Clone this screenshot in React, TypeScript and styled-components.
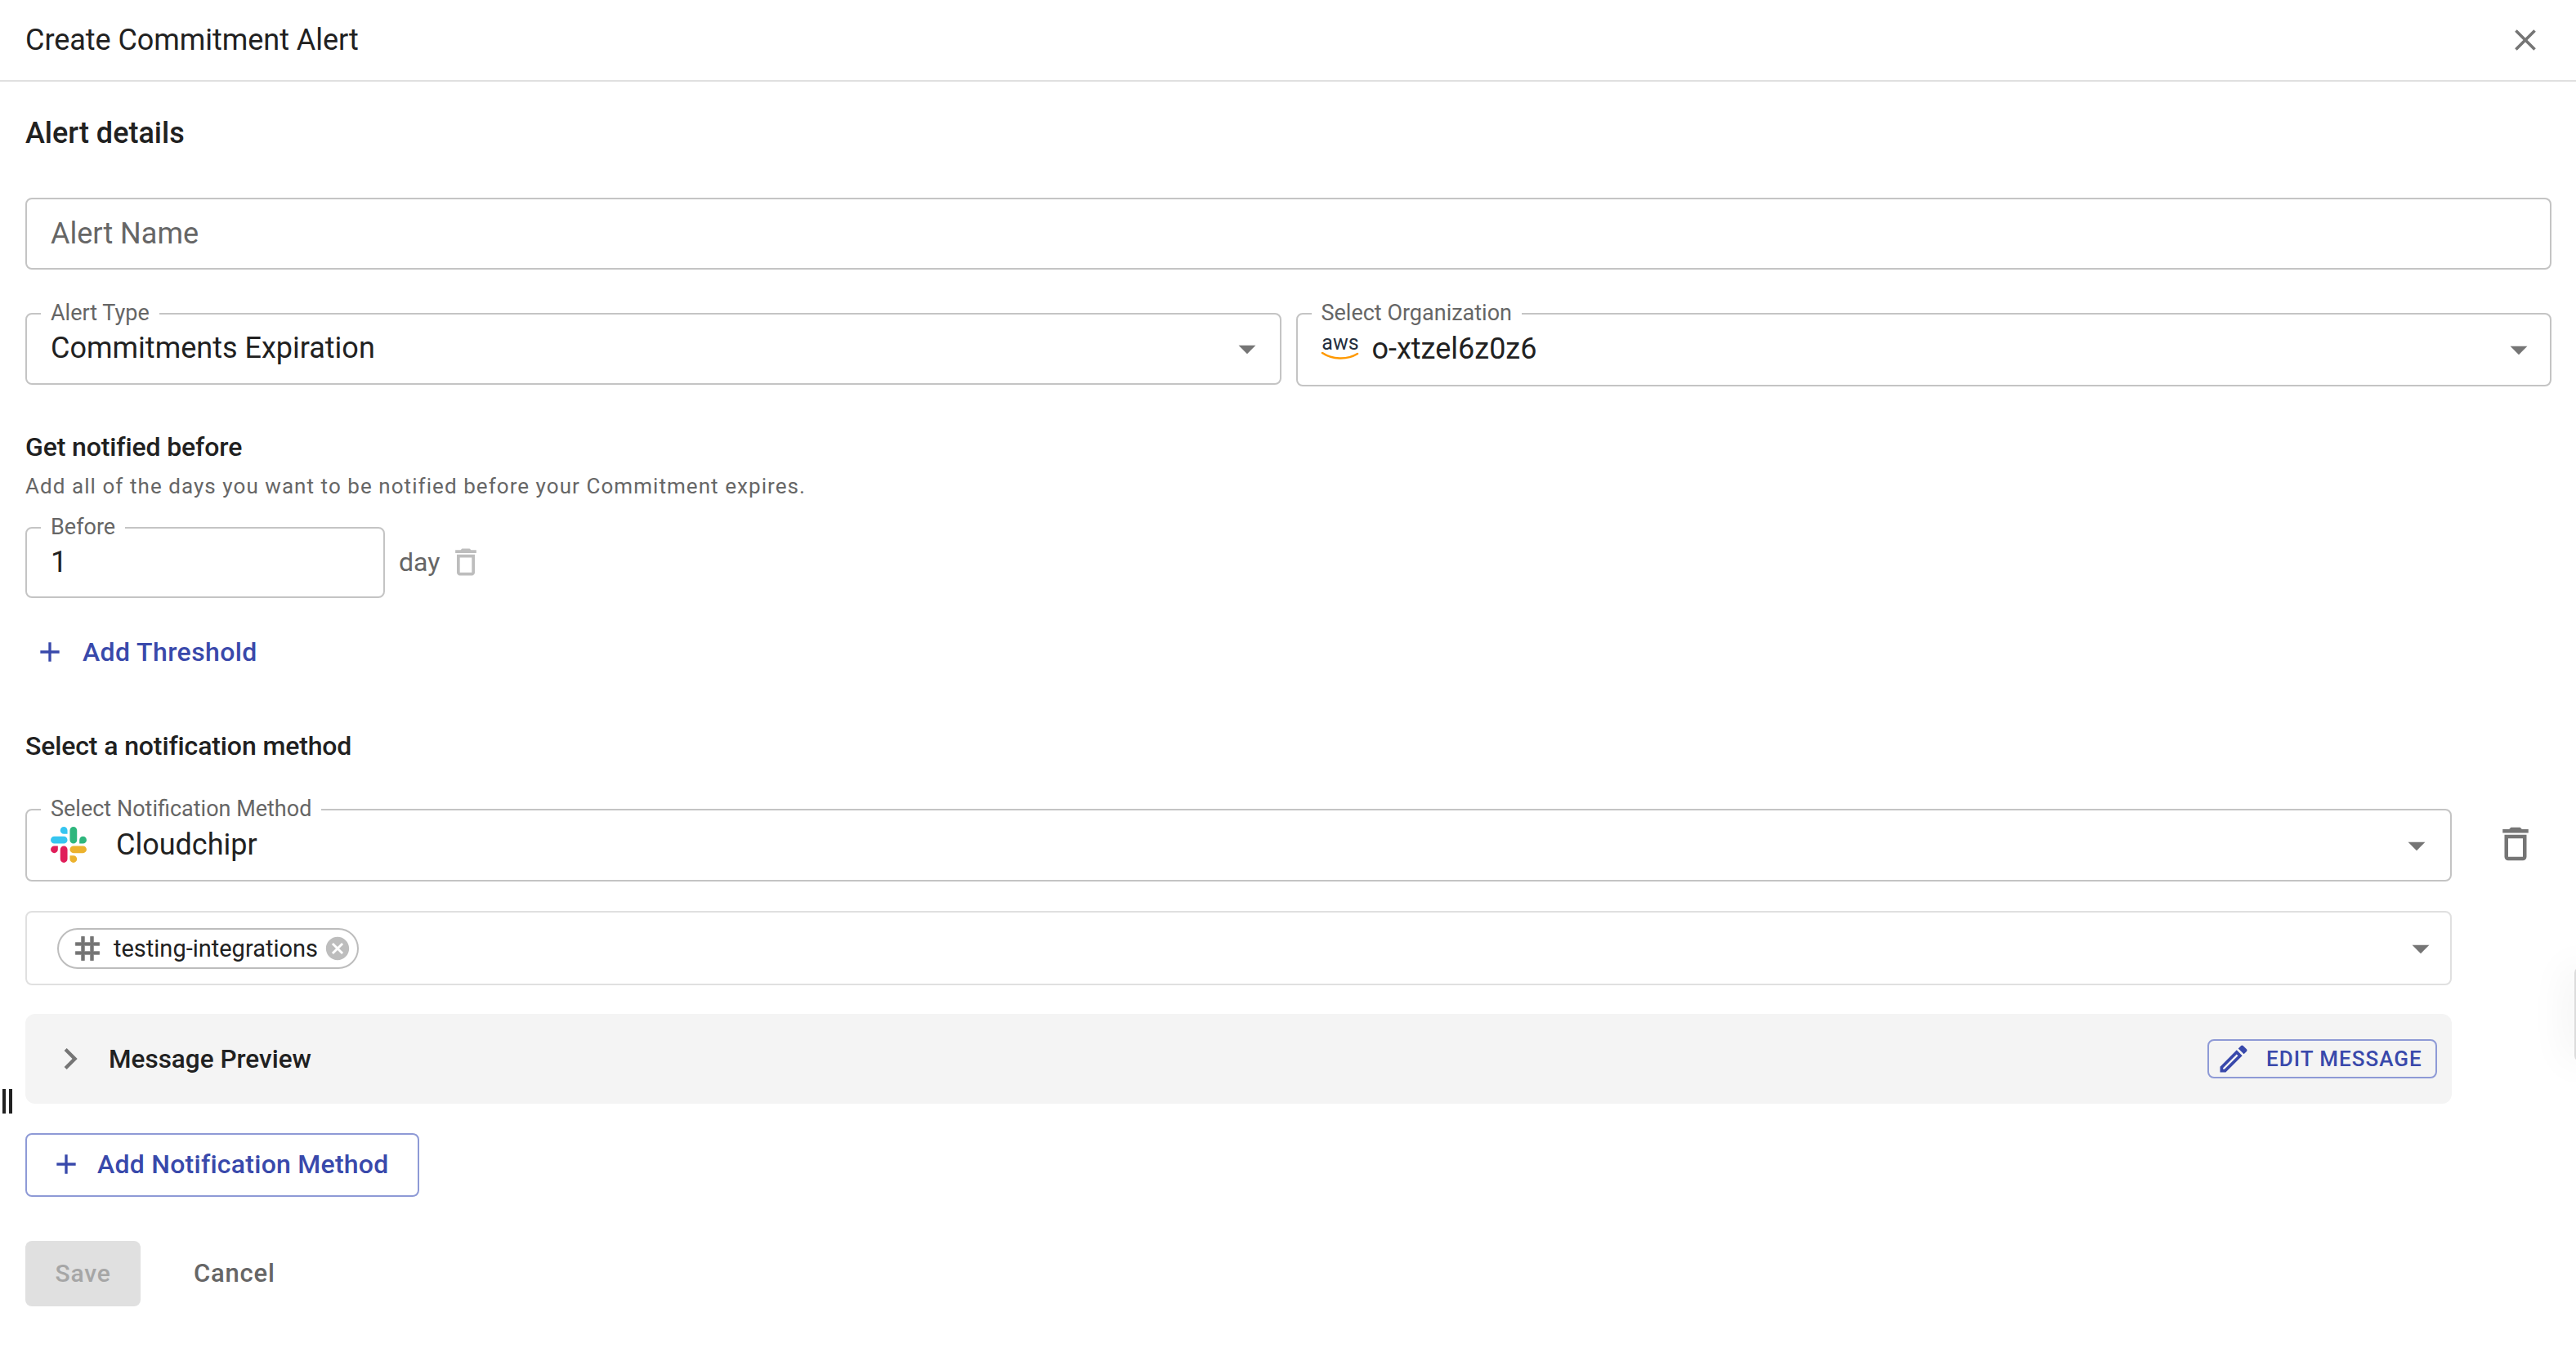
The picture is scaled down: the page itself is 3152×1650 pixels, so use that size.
import React from "react";
import styled, { createGlobalStyle } from "styled-components";

const GlobalStyle = createGlobalStyle`
  html, body {
    margin: 0;
    padding: 0;
    background: #fff;
  }
  body {
    font-family: Roboto, "Liberation Sans", sans-serif;
    color: #212121;
    -webkit-font-smoothing: antialiased;
  }
`;

const primary = "#3949ab";
const primaryBorder = "#8e9ad6";

//== Styling ==//
const Page = styled.div`
  position: relative;
  width: 3152px;
  height: 1650px;
  overflow: hidden;
`;

const Header = styled.header`
  display: flex;
  align-items: center;
  justify-content: space-between;
  height: 98px;
  padding: 0 40px 0 31px;
  border-bottom: 2px solid #e0e0e0;
`;

const Title = styled.div`
  font-size: 36px;
  line-height: 48px;
  font-weight: 400;
  letter-spacing: -0.05px;
`;

const Body = styled.main`
  padding: 0 30px 0 31px;
`;

const SectionTitle = styled.h2<{ $mt: number; $large?: boolean }>`
  margin: ${(p) => p.$mt}px 0 0;
  font-size: ${(p) => (p.$large ? 36 : 32)}px;
  line-height: ${(p) => (p.$large ? 40 : 36)}px;
  font-weight: 500;
  letter-spacing: ${(p) => (p.$large ? 0 : -0.13)}px;
`;

const Hint = styled.p`
  margin: 14px 0 0;
  font-size: 26px;
  line-height: 32px;
  letter-spacing: 1.06px;
  color: #666;
`;

const Field = styled.div<{ $mt?: number; $h: number; $w?: number; $light?: boolean }>`
  position: relative;
  box-sizing: border-box;
  display: flex;
  align-items: center;
  flex: ${(p) => (p.$w ? `0 0 ${p.$w}px` : "1 1 0")};
  width: ${(p) => (p.$w ? `${p.$w}px` : "auto")};
  height: ${(p) => p.$h}px;
  margin-top: ${(p) => p.$mt ?? 0}px;
  padding: 0 30px 0 29px;
  border: 2px solid ${(p) => (p.$light ? "#e0e0e0" : "#c4c4c4")};
  border-radius: 8px;
  background: #fff;
`;

const FieldLabel = styled.label`
  position: absolute;
  top: -17px;
  left: 17px;
  padding: 0 12px;
  font-size: 27px;
  line-height: 30px;
  color: #666;
  background: #fff;
  white-space: nowrap;
`;

const Value = styled.span<{ $muted?: boolean }>`
  flex: 1;
  margin-bottom: ${(p) => (p.$muted ? 0 : 2)}px;
  font-size: 36px;
  line-height: 40px;
  color: ${(p) => (p.$muted ? "#666" : "#212121")};
`;

const Caret = styled.svg<{ $right: number }>`
  position: absolute;
  top: 50%;
  right: ${(p) => p.$right}px;
  width: 50px;
  height: 50px;
  margin-top: -25px;
  fill: #757575;
`;

const Row = styled.div`
  display: flex;
  align-items: flex-start;
  gap: 18px;
  margin-top: 53px;
`;

const ThresholdRow = styled.div`
  display: flex;
  align-items: center;
  margin-top: 34px;
`;

const Unit = styled.span`
  margin-left: 17px;
  margin-bottom: 2px;
  font-size: 32px;
  line-height: 40px;
  color: #666;
`;

const SmallTrash = styled.svg`
  width: 44px;
  height: 44px;
  margin: 0 0 2px 10px;
  fill: #bdbdbd;
`;

const TextButton = styled.div`
  display: flex;
  align-items: center;
  width: fit-content;
  height: 60px;
  margin-top: 36px;
  padding-left: 10px;
  font-size: 32px;
  font-weight: 500;
  letter-spacing: 0.4px;
  color: ${primary};
`;

const PlusIcon = styled.svg<{ $gap: number }>`
  width: 40px;
  height: 40px;
  margin-right: ${(p) => p.$gap}px;
  fill: ${primary};
`;

const MethodRow = styled.div`
  display: flex;
  align-items: center;
  margin-top: 59px;
`;

const BigTrash = styled.svg`
  width: 54px;
  height: 54px;
  margin: -4px 0 0 51px;
  fill: #757575;
`;

const SlackLogo = styled.svg`
  width: 44px;
  height: 44px;
  margin: 0 36px 2px 0;
`;

const AwsLogo = styled.svg`
  width: 48px;
  height: 40px;
  margin: 0 15px 8px -1px;
`;

const NarrowBlock = styled.div`
  width: 2969px;
`;

const Chip = styled.div`
  box-sizing: border-box;
  display: flex;
  align-items: center;
  height: 50px;
  margin-left: 8px;
  padding: 0 7px 0 13px;
  border: 2px solid #bdbdbd;
  border-radius: 25px;
  font-size: 29px;
  color: #212121;
`;

const ChipHash = styled.svg`
  width: 44px;
  height: 44px;
  margin-right: 10px;
  fill: #757575;
  stroke: #757575;
  stroke-width: 0.4;
`;

const ChipClose = styled.svg`
  width: 34px;
  height: 34px;
  margin-left: 7px;
  fill: #bdbdbd;
`;

const Preview = styled.div`
  box-sizing: border-box;
  display: flex;
  align-items: center;
  height: 110px;
  margin-top: 35px;
  padding: 0 18px 0 29px;
  border-radius: 12px;
  background: #f4f4f4;
`;

const Chevron = styled.svg`
  width: 52px;
  height: 52px;
  margin-right: 21px;
  fill: #757575;
`;

const PreviewTitle = styled.span`
  flex: 1;
  font-size: 31.5px;
  font-weight: 500;
  color: #212121;
`;

const EditButton = styled.div`
  box-sizing: border-box;
  display: flex;
  align-items: center;
  height: 48px;
  width: 281px;
  padding-left: 8px;
  border: 2px solid ${primaryBorder};
  border-radius: 8px;
  font-size: 26px;
  font-weight: 500;
  letter-spacing: 1px;
  color: ${primary};
`;

const EditIcon = styled.svg`
  width: 44px;
  height: 44px;
  margin-right: 18px;
  fill: ${primary};
`;

const OutlinedButton = styled.div`
  box-sizing: border-box;
  display: flex;
  align-items: center;
  width: 482px;
  height: 78px;
  margin-top: 36px;
  padding: 0 0 2px 28px;
  border: 2px solid ${primaryBorder};
  border-radius: 8px;
  font-size: 32px;
  font-weight: 500;
  letter-spacing: 0.25px;
  color: ${primary};
`;

const Actions = styled.div`
  display: flex;
  align-items: center;
  margin-top: 54px;
`;

const SaveButton = styled.div`
  box-sizing: border-box;
  display: flex;
  align-items: center;
  justify-content: center;
  width: 141px;
  height: 80px;
  padding-bottom: 2px;
  border-radius: 8px;
  background: #e0e0e0;
  font-size: 30px;
  font-weight: 500;
  letter-spacing: 0.8px;
  color: #a6a6a6;
`;

const CancelButton = styled.div`
  margin: 0 0 2px 65px;
  font-size: 31px;
  font-weight: 500;
  letter-spacing: 0.8px;
  color: #666;
`;

const ResizeMark = styled.div`
  position: absolute;
  left: 3px;
  top: 1333px;
  box-sizing: border-box;
  width: 12px;
  height: 30px;
  border-left: 4px solid #212121;
  border-right: 4px solid #212121;
`;

const EdgeShadow = styled.div`
  position: absolute;
  right: -10px;
  top: 1183px;
  width: 12px;
  height: 117px;
  border-radius: 8px 0 0 8px;
  background: #dcdcdc;
  box-shadow: 0 0 50px rgba(0, 0, 0, 0.14);
`;

const CloseIcon = styled.svg`
  width: 44px;
  height: 44px;
  fill: #757575;
`;

//== Icon paths ==//
const icons = {
  close: "M19 6.41 17.59 5 12 10.59 6.41 5 5 6.41 10.59 12 5 17.59 6.41 19 12 13.41 17.59 19 19 17.59 13.41 12z",
  caret: "M7 10l5 5 5-5z",
  trash: "M6 19c0 1.1.9 2 2 2h8c1.1 0 2-.9 2-2V7H6v12zM8 9h8v10H8V9zm7.5-5l-1-1h-5l-1 1H5v2h14V4h-3.5z",
  plus: "M19 13h-6v6h-2v-6H5v-2h6V5h2v6h6v2z",
  hash: "M20 10V8h-4V4h-2v4h-4V4H8v4H4v2h4v4H4v2h4v4h2v-4h4v4h2v-4h4v-2h-4v-4h4zm-6 4h-4v-4h4v4z",
  cancel:
    "M12 2C6.47 2 2 6.47 2 12s4.47 10 10 10 10-4.47 10-10S17.53 2 12 2zm5 13.59L15.59 17 12 13.41 8.41 17 7 15.59 10.59 12 7 8.41 8.41 7 12 10.59 15.59 7 17 8.41 13.41 12 17 15.59z",
  chevron: "M10 6 8.59 7.41 13.17 12l-4.58 4.59L10 18l6-6z",
  edit: "M3 17.25V21h3.75L17.81 9.94l-3.75-3.75L3 17.25zM5.92 19H5v-.92l9.06-9.06.92.92L5.92 19zM20.71 5.63l-2.34-2.34c-.2-.2-.45-.29-.71-.29s-.51.1-.7.29l-1.83 1.83 3.75 3.75 1.83-1.83c.39-.39.39-1.02 0-1.41z",
};

const SlackIcon = () => (
  <SlackLogo viewBox="0 0 2447.6 2452.5">
    <path fill="#36c5f0" d="m897.4 0c-135.3.1-244.8 109.9-244.7 245.2-.1 135.3 109.5 245.1 244.8 245.2h244.8v-245.1c.1-135.3-109.5-245.1-244.9-245.3.1 0 .1 0 0 0m0 654h-652.6c-135.3.1-244.9 109.9-244.8 245.2-.2 135.3 109.4 245.1 244.7 245.3h652.7c135.3-.1 244.9-109.9 244.8-245.2.1-135.4-109.5-245.2-244.8-245.3z" />
    <path fill="#2eb67d" d="m2447.6 899.2c.1-135.3-109.5-245.1-244.8-245.2-135.3.1-244.9 109.9-244.8 245.2v245.3h244.8c135.3-.1 244.9-109.9 244.8-245.3zm-652.7 0v-654c.1-135.2-109.4-245-244.7-245.2-135.3.1-244.9 109.9-244.8 245.2v654c-.2 135.3 109.4 245.1 244.7 245.3 135.3-.1 244.9-109.9 244.8-245.3z" />
    <path fill="#ecb22e" d="m1550.1 2452.5c135.3-.1 244.9-109.9 244.8-245.2.1-135.3-109.5-245.1-244.8-245.2h-244.8v245.2c-.1 135.2 109.5 245 244.8 245.2zm0-654.1h652.7c135.3-.1 244.9-109.9 244.8-245.2.2-135.3-109.4-245.1-244.7-245.3h-652.7c-135.3.1-244.9 109.9-244.8 245.2-.1 135.4 109.4 245.2 244.7 245.3z" />
    <path fill="#e01e5a" d="m0 1553.2c-.1 135.3 109.5 245.1 244.8 245.2 135.3-.1 244.9-109.9 244.8-245.2v-245.2h-244.8c-135.3.1-244.9 109.9-244.8 245.2zm652.7 0v654c-.2 135.3 109.4 245.1 244.7 245.3 135.3-.1 244.9-109.9 244.8-245.2v-653.9c.2-135.3-109.4-245.1-244.7-245.3-135.4 0-244.9 109.8-244.8 245.1 0 0 0 .1 0 0z" />
  </SlackLogo>
);

const AwsIcon = () => (
  <AwsLogo viewBox="0 0 48 40">
    <text x="24" y="24" textAnchor="middle" fontFamily="Roboto, sans-serif" fontSize="25" fill="#252f3e">aws</text>
    <path fill="none" stroke="#ff9900" strokeWidth="2.6" strokeLinecap="round" d="M2 28c12 8 30 9 43 1" />
  </AwsLogo>
);

const Icon = ({ as: As, d, ...rest }: { as: any; d: string; [key: string]: any }) => (
  <As viewBox="0 0 24 24" {...rest}>
    <path d={d} />
  </As>
);

//== Component ==//
const App: React.FC = () => {
  return (
    <Page>
      <GlobalStyle />
      <Header>
        <Title>Create Commitment Alert</Title>
        <Icon as={CloseIcon} d={icons.close} />
      </Header>
      <Body>
        <SectionTitle $mt={43} $large>Alert details</SectionTitle>
        <Field $mt={59} $h={88}>
          <Value $muted>Alert Name</Value>
        </Field>
        <Row>
          <Field $h={88}>
            <FieldLabel>Alert Type</FieldLabel>
            <Value>Commitments Expiration</Value>
            <Icon as={Caret} $right={15} d={icons.caret} />
          </Field>
          <Field $h={90}>
            <FieldLabel>Select Organization</FieldLabel>
            <AwsIcon />
            <Value>o-xtzel6z0z6</Value>
            <Icon as={Caret} $right={13} d={icons.caret} />
          </Field>
        </Row>
        <SectionTitle $mt={56}>Get notified before</SectionTitle>
        <Hint>Add all of the days you want to be notified before your Commitment expires.</Hint>
        <ThresholdRow>
          <Field $h={87} $w={440}>
            <FieldLabel>Before</FieldLabel>
            <Value>1</Value>
          </Field>
          <Unit>day</Unit>
          <Icon as={SmallTrash} d={icons.trash} />
        </ThresholdRow>
        <TextButton>
          <Icon as={PlusIcon} $gap={20} d={icons.plus} />
          Add Threshold
        </TextButton>
        <SectionTitle $mt={67}>Select a notification method</SectionTitle>
        <MethodRow>
          <Field $h={89} $w={2969}>
            <FieldLabel>Select Notification Method</FieldLabel>
            <SlackIcon />
            <Value>Cloudchipr</Value>
            <Icon as={Caret} $right={16} d={icons.caret} />
          </Field>
          <Icon as={BigTrash} d={icons.trash} />
        </MethodRow>
        <NarrowBlock>
          <Field $mt={36} $h={91} $light>
            <Chip>
              <Icon as={ChipHash} d={icons.hash} />
              testing-integrations
              <Icon as={ChipClose} d={icons.cancel} />
            </Chip>
            <Icon as={Caret} $right={11} d={icons.caret} />
          </Field>
          <Preview>
            <Icon as={Chevron} d={icons.chevron} />
            <PreviewTitle>Message Preview</PreviewTitle>
            <EditButton>
              <Icon as={EditIcon} d={icons.edit} />
              EDIT MESSAGE
            </EditButton>
          </Preview>
        </NarrowBlock>
        <OutlinedButton>
          <Icon as={PlusIcon} $gap={18} d={icons.plus} />
          Add Notification Method
        </OutlinedButton>
        <Actions>
          <SaveButton>Save</SaveButton>
          <CancelButton>Cancel</CancelButton>
        </Actions>
      </Body>
      <ResizeMark />
      <EdgeShadow />
    </Page>
  );
};

export default App;
